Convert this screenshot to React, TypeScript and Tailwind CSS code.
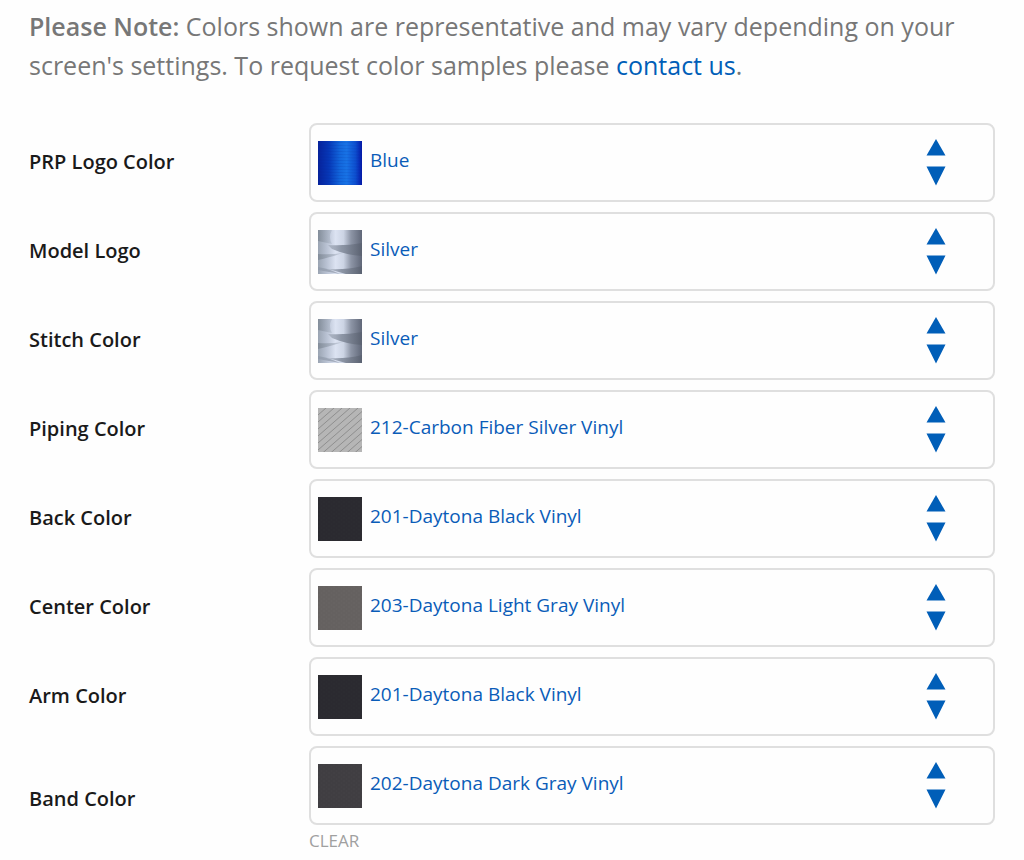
import React, { useId, useState } from 'react';

type SwatchKind = 'blue' | 'silver' | 'carbon' | 'black' | 'lightGray' | 'darkGray';

interface ColorOption {
  name: string;
  swatch: SwatchKind;
}

interface ColorField {
  id: string;
  label: string;
  value: string;
  clearable?: boolean;
}

const THREADS: ColorOption[] = [
  { name: 'Blue', swatch: 'blue' },
  { name: 'Silver', swatch: 'silver' },
];

const VINYLS: ColorOption[] = [
  { name: '201-Daytona Black Vinyl', swatch: 'black' },
  { name: '202-Daytona Dark Gray Vinyl', swatch: 'darkGray' },
  { name: '203-Daytona Light Gray Vinyl', swatch: 'lightGray' },
  { name: '212-Carbon Fiber Silver Vinyl', swatch: 'carbon' },
];

const FIELDS: ColorField[] = [
  { id: 'prp-logo', label: 'PRP Logo Color', value: 'Blue' },
  { id: 'model-logo', label: 'Model Logo', value: 'Silver' },
  { id: 'stitch', label: 'Stitch Color', value: 'Silver' },
  { id: 'piping', label: 'Piping Color', value: '212-Carbon Fiber Silver Vinyl' },
  { id: 'back', label: 'Back Color', value: '201-Daytona Black Vinyl' },
  { id: 'center', label: 'Center Color', value: '203-Daytona Light Gray Vinyl' },
  { id: 'arm', label: 'Arm Color', value: '201-Daytona Black Vinyl' },
  { id: 'band', label: 'Band Color', value: '202-Daytona Dark Gray Vinyl', clearable: true },
];

const VINYL_COLORS = {
  black: { base: '#2b2a30', grain: '#323137' },
  lightGray: { base: '#656160', grain: '#6e6a69' },
  darkGray: { base: '#403e42', grain: '#48464a' },
};

const Swatch: React.FC<{ kind: SwatchKind }> = ({ kind }) => {
  const id = useId();
  const fill = `url(#${id})`;

  if (kind === 'blue') {
    return (
      <svg className="size-11" viewBox="0 0 44 44" aria-hidden="true">
        <defs>
          <linearGradient id={id}>
            <stop offset="0" stopColor="#06229c" />
            <stop offset="0.25" stopColor="#0638b8" />
            <stop offset="0.5" stopColor="#1266dc" />
            <stop offset="0.65" stopColor="#1873e6" />
            <stop offset="0.85" stopColor="#0d4fd0" />
            <stop offset="1" stopColor="#0418a8" />
          </linearGradient>
          <pattern id={`${id}-t`} width="44" height="3" patternUnits="userSpaceOnUse">
            <path d="M0 1 L44 2" stroke="#03187c" strokeOpacity="0.1" />
          </pattern>
        </defs>
        <rect width="44" height="44" fill={fill} />
        <rect width="44" height="44" fill={`url(#${id}-t)`} />
      </svg>
    );
  }

  if (kind === 'silver') {
    return (
      <svg className="size-11" viewBox="0 0 44 44" aria-hidden="true">
        <defs>
          <linearGradient id={id}>
            <stop offset="0" stopColor="#9aa4b2" />
            <stop offset="0.2" stopColor="#b9c2d3" />
            <stop offset="0.4" stopColor="#dce3f2" />
            <stop offset="0.58" stopColor="#ccd4e4" />
            <stop offset="0.75" stopColor="#8d95a6" />
            <stop offset="1" stopColor="#606778" />
          </linearGradient>
          <linearGradient id={`${id}-s`}>
            <stop offset="0" stopColor="#a3acbb" stopOpacity="0.7" />
            <stop offset="0.4" stopColor="#858e9e" stopOpacity="0.9" />
            <stop offset="1" stopColor="#59606f" stopOpacity="0.8" />
          </linearGradient>
          <linearGradient id={`${id}-l`}>
            <stop offset="0" stopColor="#79838f" stopOpacity="0.7" />
            <stop offset="1" stopColor="#a5afbf" stopOpacity="0.4" />
          </linearGradient>
        </defs>
        <rect width="44" height="44" fill={fill} />
        <path d="M0 0 H14 Q10 7 14 14 L0 11 Z" fill={`url(#${id}-l)`} />
        <path d="M10 15 Q28 16 44 13 V26 Q28 25 14 19 Z" fill={`url(#${id}-s)`} />
        <path d="M0 24 Q12 25 25 23 Q10 28 0 30 Z" fill={`url(#${id}-l)`} />
        <path d="M10 39 Q28 40 44 36 V44 H28 Z" fill={`url(#${id}-s)`} />
        <path d="M0 37 Q12 39 22 44 L0 40 Z" fill="#8e98a8" fillOpacity="0.7" />
      </svg>
    );
  }

  if (kind === 'carbon') {
    return (
      <svg className="size-11" viewBox="0 0 44 44" aria-hidden="true">
        <defs>
          <pattern id={id} width="8" height="7" patternUnits="userSpaceOnUse">
            <rect width="8" height="7" fill="#b6b6b6" />
            <path d="M-1 7.9 L9 -0.9 M-2 1.8 L2 -1.8 M6 8.8 L10 5.2" stroke="#8e8e8e" />
          </pattern>
        </defs>
        <rect width="44" height="44" fill={fill} />
      </svg>
    );
  }

  const { base, grain } = VINYL_COLORS[kind];
  return (
    <svg className="size-11" viewBox="0 0 44 44" aria-hidden="true">
      <defs>
        <pattern id={id} width="5" height="4" patternUnits="userSpaceOnUse">
          <rect width="5" height="4" fill={base} />
          <path d="M0 1 H2 M3 3 H4" stroke={grain} strokeOpacity="0.4" />
        </pattern>
      </defs>
      <rect width="44" height="44" fill={fill} />
    </svg>
  );
};

const ColorSelect: React.FC<{ field: ColorField }> = ({ field }) => {
  const [value, setValue] = useState(field.value);
  const options = THREADS.some(o => o.name === field.value) ? THREADS : VINYLS;
  const selected = options.find(o => o.name === value);

  return (
    <div className="grid grid-cols-[280px_1fr] items-center">
      <label htmlFor={field.id} className="pb-0.5 text-[20px] leading-6 font-semibold text-[#1a1a1a]">
        {field.label}
      </label>
      <div>
        <div className="grid items-center">
          {/* swatch and arrows share the select's cell */}
          <select
            id={field.id}
            value={value}
            onChange={e => setValue(e.target.value)}
            className="col-start-1 row-start-1 h-[79px] w-full appearance-none rounded-lg border-2 border-[#dfdfdf] bg-transparent pb-1 pl-[59px] text-[19px] text-[#0a5cb8]"
          >
            {field.clearable && <option value=""></option>}
            {options.map(o => (
              <option key={o.name} value={o.name}>{o.name}</option>
            ))}
          </select>
          <div className="pointer-events-none col-start-1 row-start-1 flex items-center justify-between pr-[49px] pl-[9px]">
            <div className="size-11">{selected && <Swatch kind={selected.swatch} />}</div>
            <svg className="h-12 w-5" viewBox="0 0 20 48" fill="#005eb8" aria-hidden="true">
              <path d="M10 0 L19.5 16.5 H0.5 Z" />
              <path d="M0.5 27.5 H19.5 L10 46.5 Z" />
            </svg>
          </div>
        </div>
        {field.clearable && (
          <button
            type="button"
            onClick={() => setValue('')}
            className="block pt-1 text-[17px] leading-6 text-[#a0a0a0]"
          >
            CLEAR
          </button>
        )}
      </div>
    </div>
  );
};

const App: React.FC = () => {
  return (
    <main className="min-h-screen bg-[#fefefe] px-[29px] pt-[7px] font-['Open_Sans','Noto_Sans',sans-serif]">
      <p className="text-[25px] leading-[39px] text-[#777777]">
        <strong className="font-semibold">Please Note:</strong> Colors shown are representative and may vary
        depending on your screen's settings. To request color samples please{' '}
        <a href="#contact" className="text-[#005eb8]">contact us</a>.
      </p>
      <form className="mt-[38px] flex flex-col gap-[10px]">
        {FIELDS.map(field => (
          <ColorSelect key={field.id} field={field} />
        ))}
      </form>
    </main>
  );
};

export default App;
